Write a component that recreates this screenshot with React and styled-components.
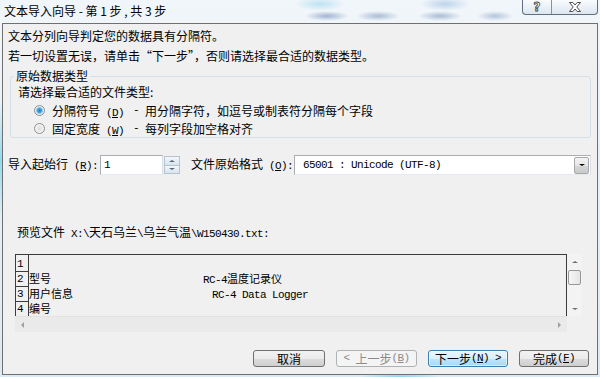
import React from 'react';
import styled, { createGlobalStyle } from 'styled-components';

const GlobalStyle = createGlobalStyle`
  html, body {
    margin: 0;
    padding: 0;
  }
  body {
    width: 600px;
    height: 377px;
    overflow: hidden;
    font-family: "Noto Sans CJK SC", "Noto Sans", sans-serif;
    font-size: 12px;
    color: #000;
  }
`;

const Window = styled.div`
  width: 600px;
  height: 377px;
  box-sizing: border-box;
  padding: 0 2px 2px 2px;
  display: flex;
  flex-direction: column;
  background:
    radial-gradient(ellipse 22px 5px at 327px 16px, rgba(40, 80, 150, 0.4), transparent),
    radial-gradient(ellipse 22px 5px at 378px 16px, rgba(40, 80, 150, 0.35), transparent),
    radial-gradient(ellipse 22px 5px at 440px 16px, rgba(40, 80, 150, 0.35), transparent),
    radial-gradient(ellipse 18px 5px at 495px 16px, rgba(40, 80, 150, 0.3), transparent),
    radial-gradient(ellipse 25px 7px at 320px 4px, rgba(90, 190, 230, 0.35), transparent),
    radial-gradient(ellipse 25px 7px at 445px 4px, rgba(70, 130, 200, 0.3), transparent),
    radial-gradient(ellipse 30px 60px at 0px 160px, rgba(90, 200, 230, 0.6), transparent),
    radial-gradient(ellipse 40px 6px at 400px 377px, rgba(90, 200, 230, 0.6), transparent),
    linear-gradient(180deg, #f1f6fa 0%, #dde9f3 100%);
`;

const TitleBar = styled.div`
  height: 23px;
  flex: none;
  display: flex;
  align-items: flex-start;
`;

const Title = styled.div`
  padding: 4px 0 0 2px;
  line-height: 14px;
  font-size: 12px;
  white-space: pre;
`;

const CaptionGroup = styled.div`
  margin-left: auto;
  display: flex;
  height: 15px;
  box-sizing: border-box;
  border: 1px solid #5f6f80;
  border-top: none;
  border-radius: 0 0 4px 4px;
  overflow: hidden;
  background: linear-gradient(180deg, rgba(255, 255, 255, 0.6), rgba(215, 226, 238, 0.8));
`;

const CaptionButton = styled.div`
  width: ${p => p.$w}px;
  display: flex;
  align-items: center;
  justify-content: center;
  & + & {
    border-left: 1px solid #8494a6;
  }
`;

const HelpGlyph = styled.span`
  font-family: "DejaVu Sans", sans-serif;
  font-weight: bold;
  font-size: 12px;
  line-height: 12px;
  color: #fff;
  -webkit-text-stroke: 0.8px #3d3d3d;
`;

const Client = styled.div`
  flex: 1;
  border: 1px solid #707070;
  background: #f0f0f0;
  display: flex;
  flex-direction: column;
`;

const Intro = styled.div`
  margin-top: 2px;
  padding-left: 5px;
  line-height: 20px;
`;

const Mono = styled.span`
  font-family: "Liberation Mono", "DejaVu Sans Mono", monospace;
  font-size: 11px;
  letter-spacing: -0.6px;
  white-space: pre;
`;

const Key = styled.u`
  text-decoration-thickness: 1px;
  text-underline-offset: 1px;
`;

const Group = styled.fieldset`
  margin: 3px 6px 0 7px;
  padding: 0 0 0 7px;
  border: 1px solid #d5dfe5;
  border-radius: 3px;
  min-width: 0;
`;

const Legend = styled.legend`
  margin-left: -4px;
  padding: 0 2px;
  line-height: 14px;
`;

const GroupLine = styled.div`
  line-height: 18px;
`;

const OptionRow = styled.div`
  display: flex;
  align-items: center;
  height: 18px;
  padding-left: 16px;
`;

const Radio = styled.span`
  width: 11px;
  height: 11px;
  box-sizing: border-box;
  border-radius: 50%;
  border: 1px solid #8e8f8f;
  margin-right: 7px;
  background: ${p => p.$checked
    ? 'radial-gradient(circle, #1f7fc4 0, #3fa2e0 2px, #7cc6ef 3px, #dfe6ea 3.5px, #f7f9fa 100%)'
    : 'radial-gradient(circle, #dcdcdc 0, #f2f2f2 4px, #fbfbfb 100%)'};
`;

const OptName = styled.span`
  width: 81px;
`;

const FieldRow = styled.div`
  margin: 17px 6px 0 5px;
  height: 20px;
  display: flex;
  align-items: center;
`;

const FieldLabel = styled.span`
  width: ${p => p.$w}px;
  margin-left: ${p => p.$ml || 0}px;
  line-height: 16px;
  white-space: nowrap;
`;

const TextBox = styled.div`
  width: ${p => p.$w ? `${p.$w}px` : 'auto'};
  flex: ${p => p.$w ? 'none' : '1'};
  height: 20px;
  box-sizing: border-box;
  border: 1px solid #abadb3;
  border-right-color: #dbdfe6;
  border-bottom-color: #e3e9ef;
  background: #fff;
  display: flex;
  align-items: center;
  padding-left: ${p => p.$pl}px;
`;

const Spinner = styled.div`
  width: 16px;
  height: 18px;
  box-sizing: border-box;
  margin-left: 1px;
  border: 1px solid #b6c3d0;
  display: flex;
  flex-direction: column;
`;

const SpinHalf = styled.div`
  flex: 1;
  display: flex;
  align-items: center;
  justify-content: center;
  background: linear-gradient(180deg, #f3f7fb, #d7e3ee);
  & + & {
    border-top: 1px solid #b6c3d0;
  }
`;

const Arrow = styled.span`
  width: 0;
  height: 0;
  border-left: ${p => p.$s}px solid transparent;
  border-right: ${p => p.$s}px solid transparent;
  ${p => p.$up ? 'border-bottom' : 'border-top'}: ${p => p.$s - 1}px solid ${p => p.$c || '#444'};
`;

const SideArrow = styled.span`
  width: 0;
  height: 0;
  border-top: 3px solid transparent;
  border-bottom: 3px solid transparent;
  ${p => p.$left ? 'border-right' : 'border-left'}: 3px solid #a0a0a0;
`;

const DropButton = styled.div`
  margin-left: auto;
  margin-right: 1px;
  width: 15px;
  height: 17px;
  box-sizing: border-box;
  border: 1px solid #a7a7a7;
  border-radius: 2px;
  background: linear-gradient(180deg, #f4f4f4 0%, #e6e6e6 50%, #d6d6d6 51%, #cacaca 100%);
  display: flex;
  align-items: center;
  justify-content: center;
`;

const PreviewLabel = styled.div`
  margin-top: 49px;
  padding-left: 14px;
  line-height: 16px;
`;

const Preview = styled.div`
  margin: 12px 0 0 12px;
  width: 567px;
  height: 78px;
  display: grid;
  grid-template-columns: 552px 15px;
  grid-template-rows: 62px 16px;
`;

const PreviewBox = styled.div`
  border: 1px solid #3c3c3c;
  border-bottom: none;
  overflow: hidden;
  font-size: 11px;
`;

const DataRow = styled.div`
  display: grid;
  grid-template-columns: 13px 174px 1fr;
  height: 15px;
  line-height: 15px;
  white-space: pre;
`;

const RowNum = styled.div`
  border-right: 1px solid #3c3c3c;
  border-bottom: 1px solid #3c3c3c;
  padding-left: 1px;
  padding-top: 1px;
  line-height: 13px;
`;

const Cell = styled.div`
  padding-left: ${p => p.$pl || 0}px;
  padding-top: 2px;
  line-height: 13px;
  overflow: hidden;
`;

const VScroll = styled.div`
  background: #f3f3f3;
  display: flex;
  flex-direction: column;
  align-items: center;
`;

const ScrollEnd = styled.div`
  width: 15px;
  height: 15px;
  display: flex;
  align-items: center;
  justify-content: center;
`;

const ScrollGap = styled.div`
  flex: 1;
`;

const Thumb = styled.div`
  width: 13px;
  height: 15px;
  margin-top: 1px;
  box-sizing: border-box;
  border: 1px solid #979797;
  border-radius: 2px;
  background: linear-gradient(90deg, #f6f6f6, #e4e4e4);
`;

const HScroll = styled.div`
  background: #eaeaea;
  border-top: 1px solid #e2e2e2;
  display: flex;
  align-items: center;
  justify-content: space-between;
  padding: 0 6px;
`;

const ButtonBar = styled.div`
  margin-top: 18px;
  padding-right: 8px;
  display: flex;
  justify-content: flex-end;
  gap: 11px;
`;

const Button = styled.div`
  width: ${p => p.$w}px;
  height: 17px;
  box-sizing: border-box;
  border-radius: 3px;
  display: flex;
  align-items: center;
  justify-content: center;
  line-height: 15px;
  white-space: nowrap;
  border: 1px solid #707070;
  color: #000;
  background: linear-gradient(180deg, #f2f2f2 0%, #ebebeb 50%, #dddddd 51%, #cfcfcf 100%);

  ${p => p.$disabled && `
    border-color: #adb2b5;
    color: #8a8a8a;
    background: #f4f4f4;
  `}
  ${p => p.$default && `
    border-color: #3c7fb1;
    background: linear-gradient(180deg, #eaf6fd 0%, #d9f0fc 50%, #bee6fd 51%, #a7d9f5 100%);
    box-shadow: inset 0 0 0 1px rgba(255, 255, 255, 0.5);
  `}
`;

const rows = [
  ['1', '', ''],
  ['2', '型号', 'RC-4温度记录仪'],
  ['3', '用户信息', 'RC-4 Data Logger'],
  ['4', '编号', ''],
];

function mixed(text) {
  // ASCII runs go to the mono face, like SimSun's half-width glyphs
  return text.split(/([\x20-\x7e]+)/).filter(Boolean).map((part, i) =>
    /^[\x20-\x7e]+$/.test(part) ? <Mono key={i}>{part}</Mono> : <span key={i}>{part}</span>
  );
}

export default function App() {
  return (
    <>
      <GlobalStyle />
      <Window>
        <TitleBar>
          <Title>文本导入向导 - 第 1 步 , 共 3 步</Title>
          <CaptionGroup>
            <CaptionButton $w={28}>
              <HelpGlyph>?</HelpGlyph>
            </CaptionButton>
            <CaptionButton $w={45}>
              <svg width="12" height="10" viewBox="0 0 12 10">
                <polygon
                  points="0.5,0.5 3.8,0.5 6,3 8.2,0.5 11.5,0.5 7.8,5 11.5,9.5 8.2,9.5 6,7 3.8,9.5 0.5,9.5 4.2,5"
                  fill="#fff"
                  stroke="#3d3d3d"
                  strokeWidth="0.9"
                  strokeLinejoin="round"
                />
              </svg>
            </CaptionButton>
          </CaptionGroup>
        </TitleBar>

        <Client>
          <Intro>
            <div>文本分列向导判定您的数据具有分隔符。</div>
            <div>若一切设置无误，请单击“下一步”，否则请选择最合适的数据类型。</div>
          </Intro>

          <Group>
            <Legend>原始数据类型</Legend>
            <GroupLine>请选择最合适的文件类型:</GroupLine>
            <OptionRow>
              <Radio $checked />
              <OptName>分隔符号<Mono> (<Key>D</Key>)</Mono></OptName>
              <Mono>- </Mono>用分隔字符，如逗号或制表符分隔每个字段
            </OptionRow>
            <OptionRow>
              <Radio />
              <OptName>固定宽度<Mono> (<Key>W</Key>)</Mono></OptName>
              <Mono>- </Mono>每列字段加空格对齐
            </OptionRow>
          </Group>

          <FieldRow>
            <FieldLabel $w={92}>导入起始行<Mono> (<Key>R</Key>):</Mono></FieldLabel>
            <TextBox $w={63} $pl={3}><Mono>1</Mono></TextBox>
            <Spinner>
              <SpinHalf><Arrow $up $s={3} $c="#55657a" /></SpinHalf>
              <SpinHalf><Arrow $s={3} $c="#55657a" /></SpinHalf>
            </Spinner>
            <FieldLabel $w={103} $ml={11}>文件原始格式<Mono> (<Key>O</Key>):</Mono></FieldLabel>
            <TextBox $pl={8}>
              <Mono>65001 : Unicode (UTF-8)</Mono>
              <DropButton><Arrow $s={3} $c="#000" /></DropButton>
            </TextBox>
          </FieldRow>

          <PreviewLabel>{mixed('预览文件 X:\\天石乌兰\\乌兰气温\\W150430.txt:')}</PreviewLabel>

          <Preview>
            <PreviewBox>
              {rows.map(([n, a, b]) => (
                <DataRow key={n}>
                  <RowNum><Mono>{n}</Mono></RowNum>
                  <Cell>{a}</Cell>
                  <Cell $pl={b.startsWith('RC-4 ') ? 9 : 0}>{mixed(b)}</Cell>
                </DataRow>
              ))}
            </PreviewBox>
            <VScroll>
              <ScrollEnd><Arrow $up $s={3} $c="#6e6e6e" /></ScrollEnd>
              <Thumb />
              <ScrollGap />
              <ScrollEnd><Arrow $s={3} $c="#6e6e6e" /></ScrollEnd>
            </VScroll>
            <HScroll>
              <SideArrow $left />
              <SideArrow />
            </HScroll>
            <div />
          </Preview>

          <ButtonBar>
            <Button $w={72}>取消</Button>
            <Button $w={81} $disabled><Mono>&lt; </Mono>上一步<Mono>(<Key>B</Key>)</Mono></Button>
            <Button $w={80} $default>下一步<Mono>(<Key>N</Key>) &gt;</Mono></Button>
            <Button $w={70}>完成<Mono>(<Key>F</Key>)</Mono></Button>
          </ButtonBar>
        </Client>
      </Window>
    </>
  );
}
